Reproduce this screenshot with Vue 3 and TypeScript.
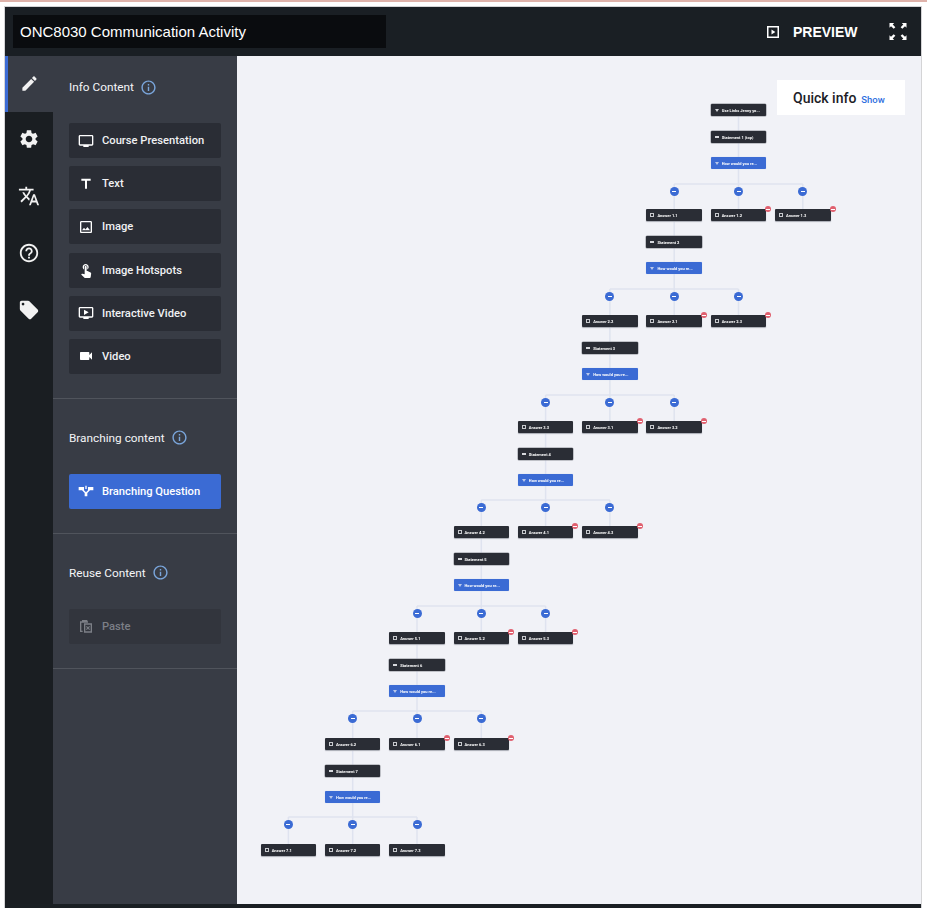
<script setup lang="ts">
import { computed } from 'vue'

interface PanelItem {
  label: string
  icon: string
}

const icons = {
  pencil: 'M3 17.25V21h3.75L17.81 9.94l-3.75-3.75L3 17.25zM20.71 7.04c.39-.39.39-1.02 0-1.41l-2.34-2.34c-.39-.39-1.02-.39-1.41 0l-1.83 1.83 3.75 3.75 1.83-1.83z',
  gear: 'M19.14 12.94c.04-.3.06-.61.06-.94 0-.32-.02-.64-.07-.94l2.03-1.58c.18-.14.23-.41.12-.61l-1.92-3.32c-.12-.22-.37-.29-.59-.22l-2.39.96c-.5-.38-1.03-.7-1.62-.94l-.36-2.54c-.04-.24-.24-.41-.48-.41h-3.84c-.24 0-.43.17-.47.41l-.36 2.54c-.59.24-1.13.57-1.62.94l-2.39-.96c-.22-.08-.47 0-.59.22L2.74 8.87c-.12.21-.08.47.12.61l2.03 1.58c-.05.3-.09.63-.09.94s.02.64.07.94l-2.03 1.58c-.18.14-.23.41-.12.61l1.92 3.32c.12.22.37.29.59.22l2.39-.96c.5.38 1.03.7 1.62.94l.36 2.54c.05.24.24.41.48.41h3.84c.24 0 .44-.17.47-.41l.36-2.54c.59-.24 1.13-.56 1.62-.94l2.39.96c.22.08.47 0 .59-.22l1.92-3.32c.12-.22.07-.47-.12-.61l-2.01-1.58zM12 15.6c-1.98 0-3.6-1.62-3.6-3.6s1.62-3.6 3.6-3.6 3.6 1.62 3.6 3.6-1.62 3.6-3.6 3.6z',
  translate: 'M12.87 15.07l-2.54-2.51.03-.03c1.74-1.94 2.98-4.17 3.71-6.53H17V4h-7V2H8v2H1v1.99h11.17C11.5 7.92 10.44 9.75 9 11.35 8.07 10.32 7.3 9.19 6.69 8h-2c.73 1.63 1.73 3.17 2.98 4.56l-5.09 5.02L4 19l5-5 3.11 3.11.76-2.04zM18.5 10h-2L12 22h2l1.12-3h4.75L21 22h2l-4.5-12zm-2.62 7l1.62-4.33L19.12 17h-3.24z',
  help: 'M11 18h2v-2h-2v2zm1-16C6.48 2 2 6.48 2 12s4.48 10 10 10 10-4.48 10-10S17.52 2 12 2zm0 18c-4.41 0-8-3.59-8-8s3.59-8 8-8 8 3.59 8 8-3.59 8-8 8zm0-14c-2.21 0-4 1.79-4 4h2c0-1.1.9-2 2-2s2 .9 2 2c0 2-3 1.75-3 5h2c0-2.25 3-2.5 3-5 0-2.21-1.79-4-4-4z',
  tag: 'M21.41 11.58l-9-9C12.05 2.22 11.55 2 11 2H4c-1.1 0-2 .9-2 2v7c0 .55.22 1.05.59 1.42l9 9c.36.36.86.58 1.41.58.55 0 1.05-.22 1.41-.59l7-7c.37-.36.59-.86.59-1.41 0-.55-.23-1.06-.59-1.42zM5.5 7C4.67 7 4 6.33 4 5.5S4.67 4 5.5 4 7 4.67 7 5.5 6.33 7 5.5 7z',
  info: 'M11 7h2v2h-2zm0 4h2v6h-2zm1-9C6.48 2 2 6.48 2 12s4.48 10 10 10 10-4.48 10-10S17.52 2 12 2zm0 18c-4.41 0-8-3.59-8-8s3.59-8 8-8 8 3.59 8 8-3.59 8-8 8z',
  tv: 'M21 3H3c-1.1 0-2 .9-2 2v12c0 1.1.9 2 2 2h5v2h8v-2h5c1.1 0 1.99-.9 1.99-2L23 5c0-1.1-.9-2-2-2zm0 14H3V5h18v12z',
  text: 'M5 4v3h5.5v12h3V7H19V4z',
  image: 'M19 5v14H5V5h14m0-2H5c-1.1 0-2 .9-2 2v14c0 1.1.9 2 2 2h14c1.1 0 2-.9 2-2V5c0-1.1-.9-2-2-2zm-4.86 8.86l-3 3.87L9 13.14 6 17h12l-3.86-5.14z',
  touch: 'M9 11.24V7.5C9 6.12 10.12 5 11.5 5S14 6.12 14 7.5v3.74c1.21-.81 2-2.18 2-3.74C16 5.01 13.99 3 11.5 3S7 5.01 7 7.5c0 1.56.79 2.93 2 3.74zm9.84 4.63l-4.54-2.26c-.17-.07-.35-.11-.54-.11H13v-6c0-.83-.67-1.5-1.5-1.5S10 6.67 10 7.5v10.74l-3.43-.72c-.08-.01-.15-.03-.24-.03-.31 0-.59.13-.79.33l-.79.8 4.94 4.94c.27.27.65.44 1.06.44h6.79c.75 0 1.33-.55 1.44-1.28l.75-5.27c.01-.07.02-.14.02-.2 0-.62-.38-1.16-.91-1.38z',
  ivideo: 'M21 3H3c-1.11 0-2 .89-2 2v12c0 1.1.89 2 2 2h5v2h8v-2h5c1.1 0 1.99-.9 1.99-2L23 5c0-1.11-.9-2-2-2zm0 14H3V5h18v12zm-5-6l-7 4V7z',
  video: 'M17 10.5V7c0-.55-.45-1-1-1H4c-.55 0-1 .45-1 1v10c0 .55.45 1 1 1h12c.55 0 1-.45 1-1v-3.5l4 4v-11l-4 4z',
  branch: 'M1 6h8v5l3 3 3-3V6h8v5h-5l-4 4v5h-4v-5l-4-4H1zM11 4h2v5h-2z',
  paste: 'M3 5h3V3h8v2h1v2H5v12h2v2H3zM9 8h12v14H9zM11 10v10h8V10zM13.2 12 15 13.8 16.8 12 18 13.2 16.2 15 18 16.8 16.8 18 15 16.2 13.2 18 12 16.8 13.8 15 12 13.2z'
}

const tabs = [icons.pencil, icons.gear, icons.translate, icons.help, icons.tag]

const infoItems: PanelItem[] = [
  { label: 'Course Presentation', icon: icons.tv },
  { label: 'Text', icon: icons.text },
  { label: 'Image', icon: icons.image },
  { label: 'Image Hotspots', icon: icons.touch },
  { label: 'Interactive Video', icon: icons.ivideo },
  { label: 'Video', icon: icons.video }
]

// order of the answers per level, left to right
const answerNames = [
  ['1.1', '1.2', '1.3'],
  ['2.2', '2.1', '2.3'],
  ['3.3', '3.1', '3.2'],
  ['4.2', '4.1', '4.3'],
  ['5.1', '5.2', '5.3'],
  ['6.2', '6.1', '6.3'],
  ['7.1', '7.2', '7.3']
]

// diagram coordinates are relative to the canvas, x and y are node centres
const NODE_W = 55.5
const NODE_H = 12
const STEP_X = 64.3
const ROOT_X = 501.5

const statementY = (n: number) => Math.floor(81 + 105.67 * n)
const questionY = (n: number) => Math.floor(107 + 105.67 * n)
const dotY = (n: number) => Math.floor(135 + 105.5 * n)
const answerY = (n: number) => Math.floor(159.5 + 105.8 * n)

interface TreeNode {
  id: string
  x: number
  y: number
  label: string
  kind: 'start' | 'statement' | 'question' | 'answer'
  removable?: boolean
}

const tree = computed(() => {
  const nodes: TreeNode[] = []
  const lines: { x1: number; y1: number; x2: number; y2: number }[] = []
  const dots: { x: number; y: number }[] = []

  nodes.push({ id: 'start', x: ROOT_X, y: 54, label: 'Use Links Jenny yo...', kind: 'start' })
  lines.push({ x1: ROOT_X, y1: 54, x2: ROOT_X, y2: questionY(0) })

  answerNames.forEach((names, level) => {
    const cx = ROOT_X - level * STEP_X
    const label = level === 0 ? 'Statement 1 (top)' : `Statement ${level + 1}`
    nodes.push({ id: `s${level}`, x: cx, y: statementY(level), label, kind: 'statement' })
    nodes.push({ id: `q${level}`, x: cx, y: questionY(level), label: 'How would you re...', kind: 'question' })

    const dy = dotY(level)
    const railY = dy - 7
    lines.push({ x1: cx, y1: questionY(level), x2: cx, y2: railY })
    lines.push({ x1: cx - STEP_X, y1: railY, x2: cx + STEP_X, y2: railY })

    names.forEach((name, i) => {
      const ax = cx + (i - 1) * STEP_X
      lines.push({ x1: ax, y1: railY, x2: ax, y2: answerY(level) })
      dots.push({ x: ax, y: dy })
      nodes.push({
        id: `a${name}`,
        x: ax,
        y: answerY(level),
        label: `Answer ${name}`,
        kind: 'answer',
        removable: level < 6 && i > 0
      })
    })

    if (level < 6) {
      const nextX = cx - STEP_X
      lines.push({ x1: nextX, y1: answerY(level), x2: nextX, y2: questionY(level + 1) })
    }
  })

  return { nodes, lines, dots }
})
</script>

<template>
  <div class="page">
    <div class="window">
      <header class="topbar">
        <div class="title">ONC8030 Communication Activity</div>
        <div class="preview">
          <svg class="preview-icon" viewBox="0 0 12 12">
            <rect x="0.75" y="0.75" width="10.5" height="10.5" fill="none" stroke="#fff" stroke-width="1.5" />
            <path d="M4.5 3.4v5.2L8.4 6z" fill="#fff" />
          </svg>
          <span>PREVIEW</span>
        </div>
        <svg class="fullscreen" viewBox="0 0 18 18">
          <path d="M0 0h5L3.4 1.6 6.2 4.4 4.4 6.2 1.6 3.4 0 5zM18 0v5l-1.6-1.6-2.8 2.8-1.8-1.8 2.8-2.8L13 0zM0 18v-5l1.6 1.6 2.8-2.8 1.8 1.8-2.8 2.8L5 18zM18 18h-5l1.6-1.6-2.8-2.8 1.8-1.8 2.8 2.8L18 13z" fill="#fff" />
        </svg>
      </header>

      <div class="body">
        <nav class="tabs">
          <div v-for="(d, i) in tabs" :key="i" class="tab" :class="{ active: i === 0 }">
            <svg viewBox="0 0 24 24" class="tab-icon"><path :d="d" /></svg>
          </div>
        </nav>

        <aside class="panel">
          <section class="section first">
            <h3>Info Content <svg viewBox="0 0 24 24" class="info"><path :d="icons.info" /></svg></h3>
            <div class="items">
              <div v-for="item in infoItems" :key="item.label" class="item">
                <svg viewBox="0 0 24 24"><path :d="item.icon" /></svg>
                {{ item.label }}
              </div>
            </div>
          </section>
          <section class="section">
            <h3>Branching content <svg viewBox="0 0 24 24" class="info"><path :d="icons.info" /></svg></h3>
            <div class="items">
              <div class="item blue">
                <svg viewBox="0 0 24 24"><path :d="icons.branch" fill-rule="evenodd" /></svg>
                Branching Question
              </div>
            </div>
          </section>
          <section class="section">
            <h3>Reuse Content <svg viewBox="0 0 24 24" class="info"><path :d="icons.info" /></svg></h3>
            <div class="items">
              <div class="item disabled">
                <svg viewBox="0 0 24 24"><path :d="icons.paste" fill-rule="evenodd" /></svg>
                Paste
              </div>
            </div>
          </section>
        </aside>

        <main class="canvas">
          <svg class="wires" width="684" height="848">
            <line
              v-for="(l, i) in tree.lines"
              :key="i"
              :x1="l.x1"
              :y1="l.y1"
              :x2="l.x2"
              :y2="l.y2"
              stroke="#dfe3ef"
              stroke-width="1.5"
            />
          </svg>

          <div
            v-for="d in tree.dots"
            :key="`${d.x}-${d.y}`"
            class="dot"
            :style="{ left: `${d.x - 4.5}px`, top: `${d.y - 4.5}px` }"
          ></div>

          <div
            v-for="n in tree.nodes"
            :key="n.id"
            class="node"
            :class="n.kind"
            :style="{ left: `${n.x - NODE_W / 2}px`, top: `${n.y - NODE_H / 2}px`, width: `${NODE_W}px`, height: `${NODE_H}px` }"
          >
            <i class="node-icon"></i>
            <span>{{ n.label }}</span>
            <b v-if="n.removable" class="remove"></b>
          </div>

          <div class="quick">
            <strong>Quick info</strong>
            <span>Show</span>
          </div>
        </main>
      </div>
    </div>
  </div>
</template>

<style>
html,
body {
  margin: 0;
  background: #fff;
}
</style>

<style scoped>
.page {
  width: 927px;
  height: 908px;
  box-sizing: border-box;
  padding: 4px 5px 0 4px;
  border-top: 2px solid #dfb3ab;
  overflow: hidden;
  font-family: Roboto, 'Liberation Sans', sans-serif;
}

.window {
  height: 100%;
  box-sizing: border-box;
  border: 1px solid #d4d4d6;
  border-bottom: 0;
  background: #1a1f23;
  display: flex;
  flex-direction: column;
  padding-bottom: 4px;
}

.topbar {
  height: 49px;
  flex: none;
  display: flex;
  align-items: center;
  background: #1a1f24;
  padding-left: 8px;
}

.title {
  width: 373px;
  height: 33px;
  box-sizing: border-box;
  padding-left: 7px;
  background: #0a0c0f;
  color: #fff;
  font: 15px/34px 'Liberation Sans', sans-serif;
}

.preview {
  margin-left: 381px;
  display: flex;
  align-items: center;
  gap: 14px;
  color: #fff;
  font: bold 14px 'Liberation Sans', sans-serif;
}

.preview-icon {
  width: 12px;
  height: 12px;
}

.fullscreen {
  width: 18px;
  height: 17px;
  margin-left: 31px;
  margin-bottom: 1px;
}

.body {
  flex: 1;
  display: flex;
  min-height: 0;
}

.tabs {
  width: 48px;
  flex: none;
  background: #1a1e22;
}

.tab {
  height: 57px;
  display: flex;
  align-items: center;
  justify-content: center;
}

.tab.active {
  height: 56px;
  margin-bottom: -2px;
  background: #383c45;
  border-left: 3px solid #3b6bd4;
  box-sizing: border-box;
  padding: 0 3px 2px 0;
}

.tab-icon {
  width: 22px;
  height: 22px;
  fill: #f2f2f2;
}

.tab.active .tab-icon {
  width: 19px;
  height: 19px;
}

.panel {
  width: 184px;
  flex: none;
  background: #383c45;
}

.section {
  padding: 30px 16px 24px;
  border-bottom: 1px solid #50545c;
}

.section.first {
  padding-top: 22px;
}

.section h3 {
  margin: 0 0 27px;
  height: 18px;
  display: flex;
  align-items: center;
  gap: 6px;
  font-size: 11.8px;
  font-weight: 400;
  color: #f4f5f7;
}

.info {
  width: 17px;
  height: 17px;
  fill: #7aa6dc;
}

.items {
  display: flex;
  flex-direction: column;
  gap: 8.2px;
}

.item {
  height: 35px;
  display: flex;
  align-items: center;
  gap: 8px;
  padding-left: 9px;
  border-radius: 2px;
  background: #2a2d35;
  color: #f0f1f3;
  font-size: 11.2px;
  font-weight: 500;
}

.item svg {
  width: 16px;
  height: 16px;
  fill: #fff;
  flex: none;
}

.item.blue {
  background: #3b6bd4;
  color: #fff;
}

.item.disabled {
  background: #32353d;
  color: #7c7f86;
}

.item.disabled svg {
  fill: #7c7f86;
}

.canvas {
  position: relative;
  flex: 1;
  background: #f1f2f7;
  overflow: hidden;
}

.wires {
  position: absolute;
  left: 0;
  top: 0;
}

.dot {
  position: absolute;
  width: 9px;
  height: 9px;
  border-radius: 50%;
  background: #3b6bd4;
  filter: blur(0.2px);
}

.dot::after {
  content: '';
  position: absolute;
  left: 2.5px;
  top: 4px;
  width: 4px;
  height: 1.2px;
  background: #fff;
}

.node {
  position: absolute;
  box-sizing: border-box;
  display: flex;
  align-items: center;
  gap: 3px;
  padding-left: 4px;
  background: #2a2d35;
  border-radius: 1px;
  color: #fff;
  font-size: 4px;
  font-weight: 700;
  white-space: nowrap;
  box-shadow: 0 1px 1px #a8abb3;
  filter: blur(0.3px);
}

.node.start,
.node.statement {
  box-shadow: 0 0 0 0.5px #8d9097;
}

.node.question {
  background: #3b6bd4;
  box-shadow: 0 0 1px #b9c8ea;
}

.node-icon {
  width: 4px;
  height: 2px;
  flex: none;
  background: #d6d8dc;
}

.start .node-icon,
.question .node-icon {
  height: 0;
  background: none;
  border-left: 2px solid transparent;
  border-right: 2px solid transparent;
  border-top: 3px solid #d6d8dc;
  box-sizing: border-box;
}

.question .node-icon {
  border-top-color: #b9c8ea;
}

.answer .node-icon {
  height: 4px;
  background: none;
  border: 1px solid #c8cace;
  box-sizing: border-box;
}

.remove {
  position: absolute;
  right: -5px;
  top: -3px;
  width: 6px;
  height: 6px;
  border-radius: 50%;
  background: #e0606f;
}

.remove::after {
  content: '';
  position: absolute;
  left: 1px;
  top: 2.5px;
  width: 4px;
  height: 1px;
  background: #fff;
}

.quick {
  position: absolute;
  left: 540px;
  top: 24px;
  width: 128px;
  height: 35px;
  box-sizing: border-box;
  padding-left: 16px;
  display: flex;
  align-items: center;
  gap: 5px;
  background: #fff;
}

.quick strong {
  font-size: 14px;
  font-weight: 500;
  color: #1c2026;
}

.quick span {
  font-size: 9.5px;
  font-weight: 500;
  color: #2f6fe0;
  margin-top: 3px;
}
</style>
